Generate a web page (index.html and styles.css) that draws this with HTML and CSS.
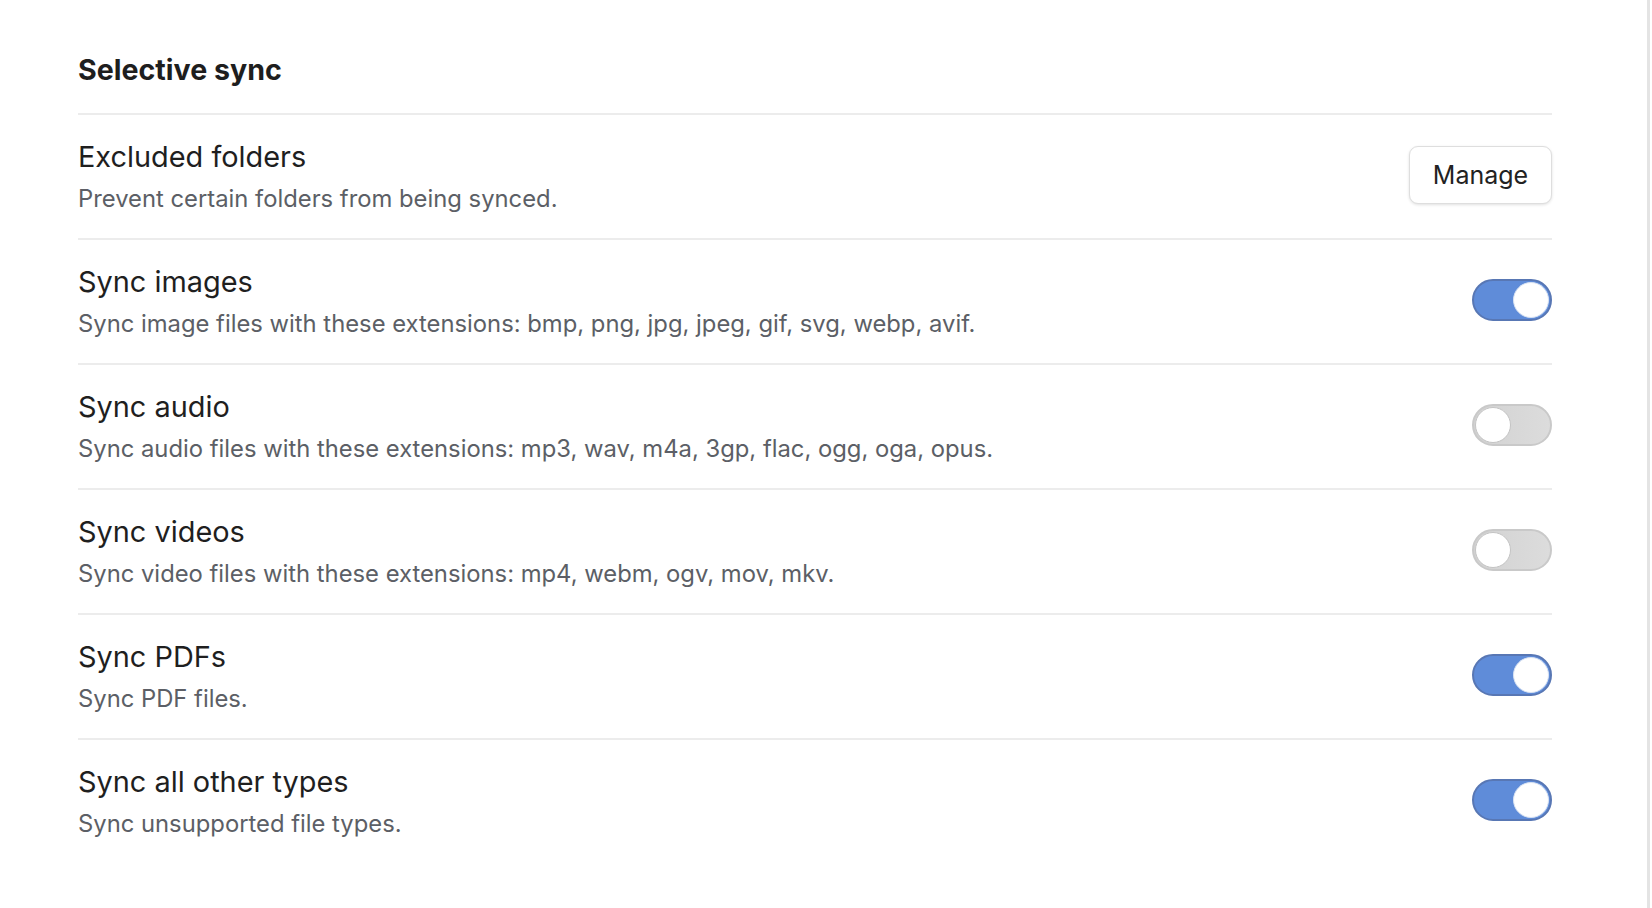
FILE: index.html
```html
<!DOCTYPE html>
<html lang="en">
<head>
<meta charset="utf-8">
<title>Selective sync</title>
<link rel="stylesheet" href="styles.css">
</head>
<body>
<div class="window">
  <main class="pane">
    <h2 class="heading">Selective sync</h2>
    <section class="list">
      <div class="row">
        <div class="info">
          <div class="title">Excluded folders</div>
          <div class="desc">Prevent certain folders from being synced.</div>
        </div>
        <button class="btn">Manage</button>
      </div>
      <div class="row">
        <div class="info">
          <div class="title">Sync images</div>
          <div class="desc">Sync image files with these extensions: bmp, png, jpg, jpeg, gif, svg, webp, avif.</div>
        </div>
        <div class="toggle on"><span class="knob"></span></div>
      </div>
      <div class="row">
        <div class="info">
          <div class="title">Sync audio</div>
          <div class="desc">Sync audio files with these extensions: mp3, wav, m4a, 3gp, flac, ogg, oga, opus.</div>
        </div>
        <div class="toggle"><span class="knob"></span></div>
      </div>
      <div class="row">
        <div class="info">
          <div class="title">Sync videos</div>
          <div class="desc">Sync video files with these extensions: mp4, webm, ogv, mov, mkv.</div>
        </div>
        <div class="toggle"><span class="knob"></span></div>
      </div>
      <div class="row">
        <div class="info">
          <div class="title">Sync PDFs</div>
          <div class="desc">Sync PDF files.</div>
        </div>
        <div class="toggle on"><span class="knob"></span></div>
      </div>
      <div class="row">
        <div class="info">
          <div class="title">Sync all other types</div>
          <div class="desc">Sync unsupported file types.</div>
        </div>
        <div class="toggle on"><span class="knob"></span></div>
      </div>
    </section>
  </main>
  <div class="edge"></div>
</div>
</body>
</html>
```
FILE: styles.css
```css
* { box-sizing: border-box; }
html, body { margin: 0; padding: 0; background: #ffffff; }
body {
  font-family: Inter, "Noto Sans", "Liberation Sans", sans-serif;
  color: #222222;
}
.window {
  display: flex;
  height: 908px;
  overflow: hidden;
}
.pane {
  flex: 1;
  padding: 52px 95px 0 78px;
}
.edge {
  width: 3px;
  margin-right: 2px;
  background: #e4e4e4;
}
.heading {
  margin: 0 0 25px;
  font-size: 28.6px;
  line-height: 36px;
  font-weight: 700;
  color: #1e1e1e;
}
.row {
  display: flex;
  align-items: center;
  justify-content: space-between;
  border-top: 2px solid #ececec;
  padding: 24px 0 21px;
}
.title {
  font-size: 28.9px;
  line-height: 36px;
  margin-bottom: 6px;
  color: #1f1f1f;
}
.desc {
  font-size: 23.8px;
  line-height: 36px;
  color: #5c5f66;
}
.btn {
  width: 143px;
  height: 58px;
  margin-bottom: 6px;
  font-family: inherit;
  font-size: 25px;
  color: #222222;
  background: #ffffff;
  border: 1px solid #dedede;
  border-radius: 9px;
  box-shadow: 0 1px 3px rgba(0, 0, 0, 0.12);
}
.toggle {
  width: 80px;
  height: 42px;
  margin-bottom: 6px;
  border-radius: 21px;
  border: 2px solid #c9c9c9;
  background: linear-gradient(90deg, #d2d2d2, #dcdcdc);
  display: flex;
  align-items: center;
  padding: 0 1px;
}
.toggle .knob {
  width: 36px;
  height: 36px;
  border-radius: 50%;
  background: #ffffff;
  border: 1px solid #c4c4c4;
}
.toggle.on {
  border-color: #5877b4;
  background: #5f8cd9;
  justify-content: flex-end;
}
.toggle.on .knob {
  border-color: #d8e2f2;
}
```
